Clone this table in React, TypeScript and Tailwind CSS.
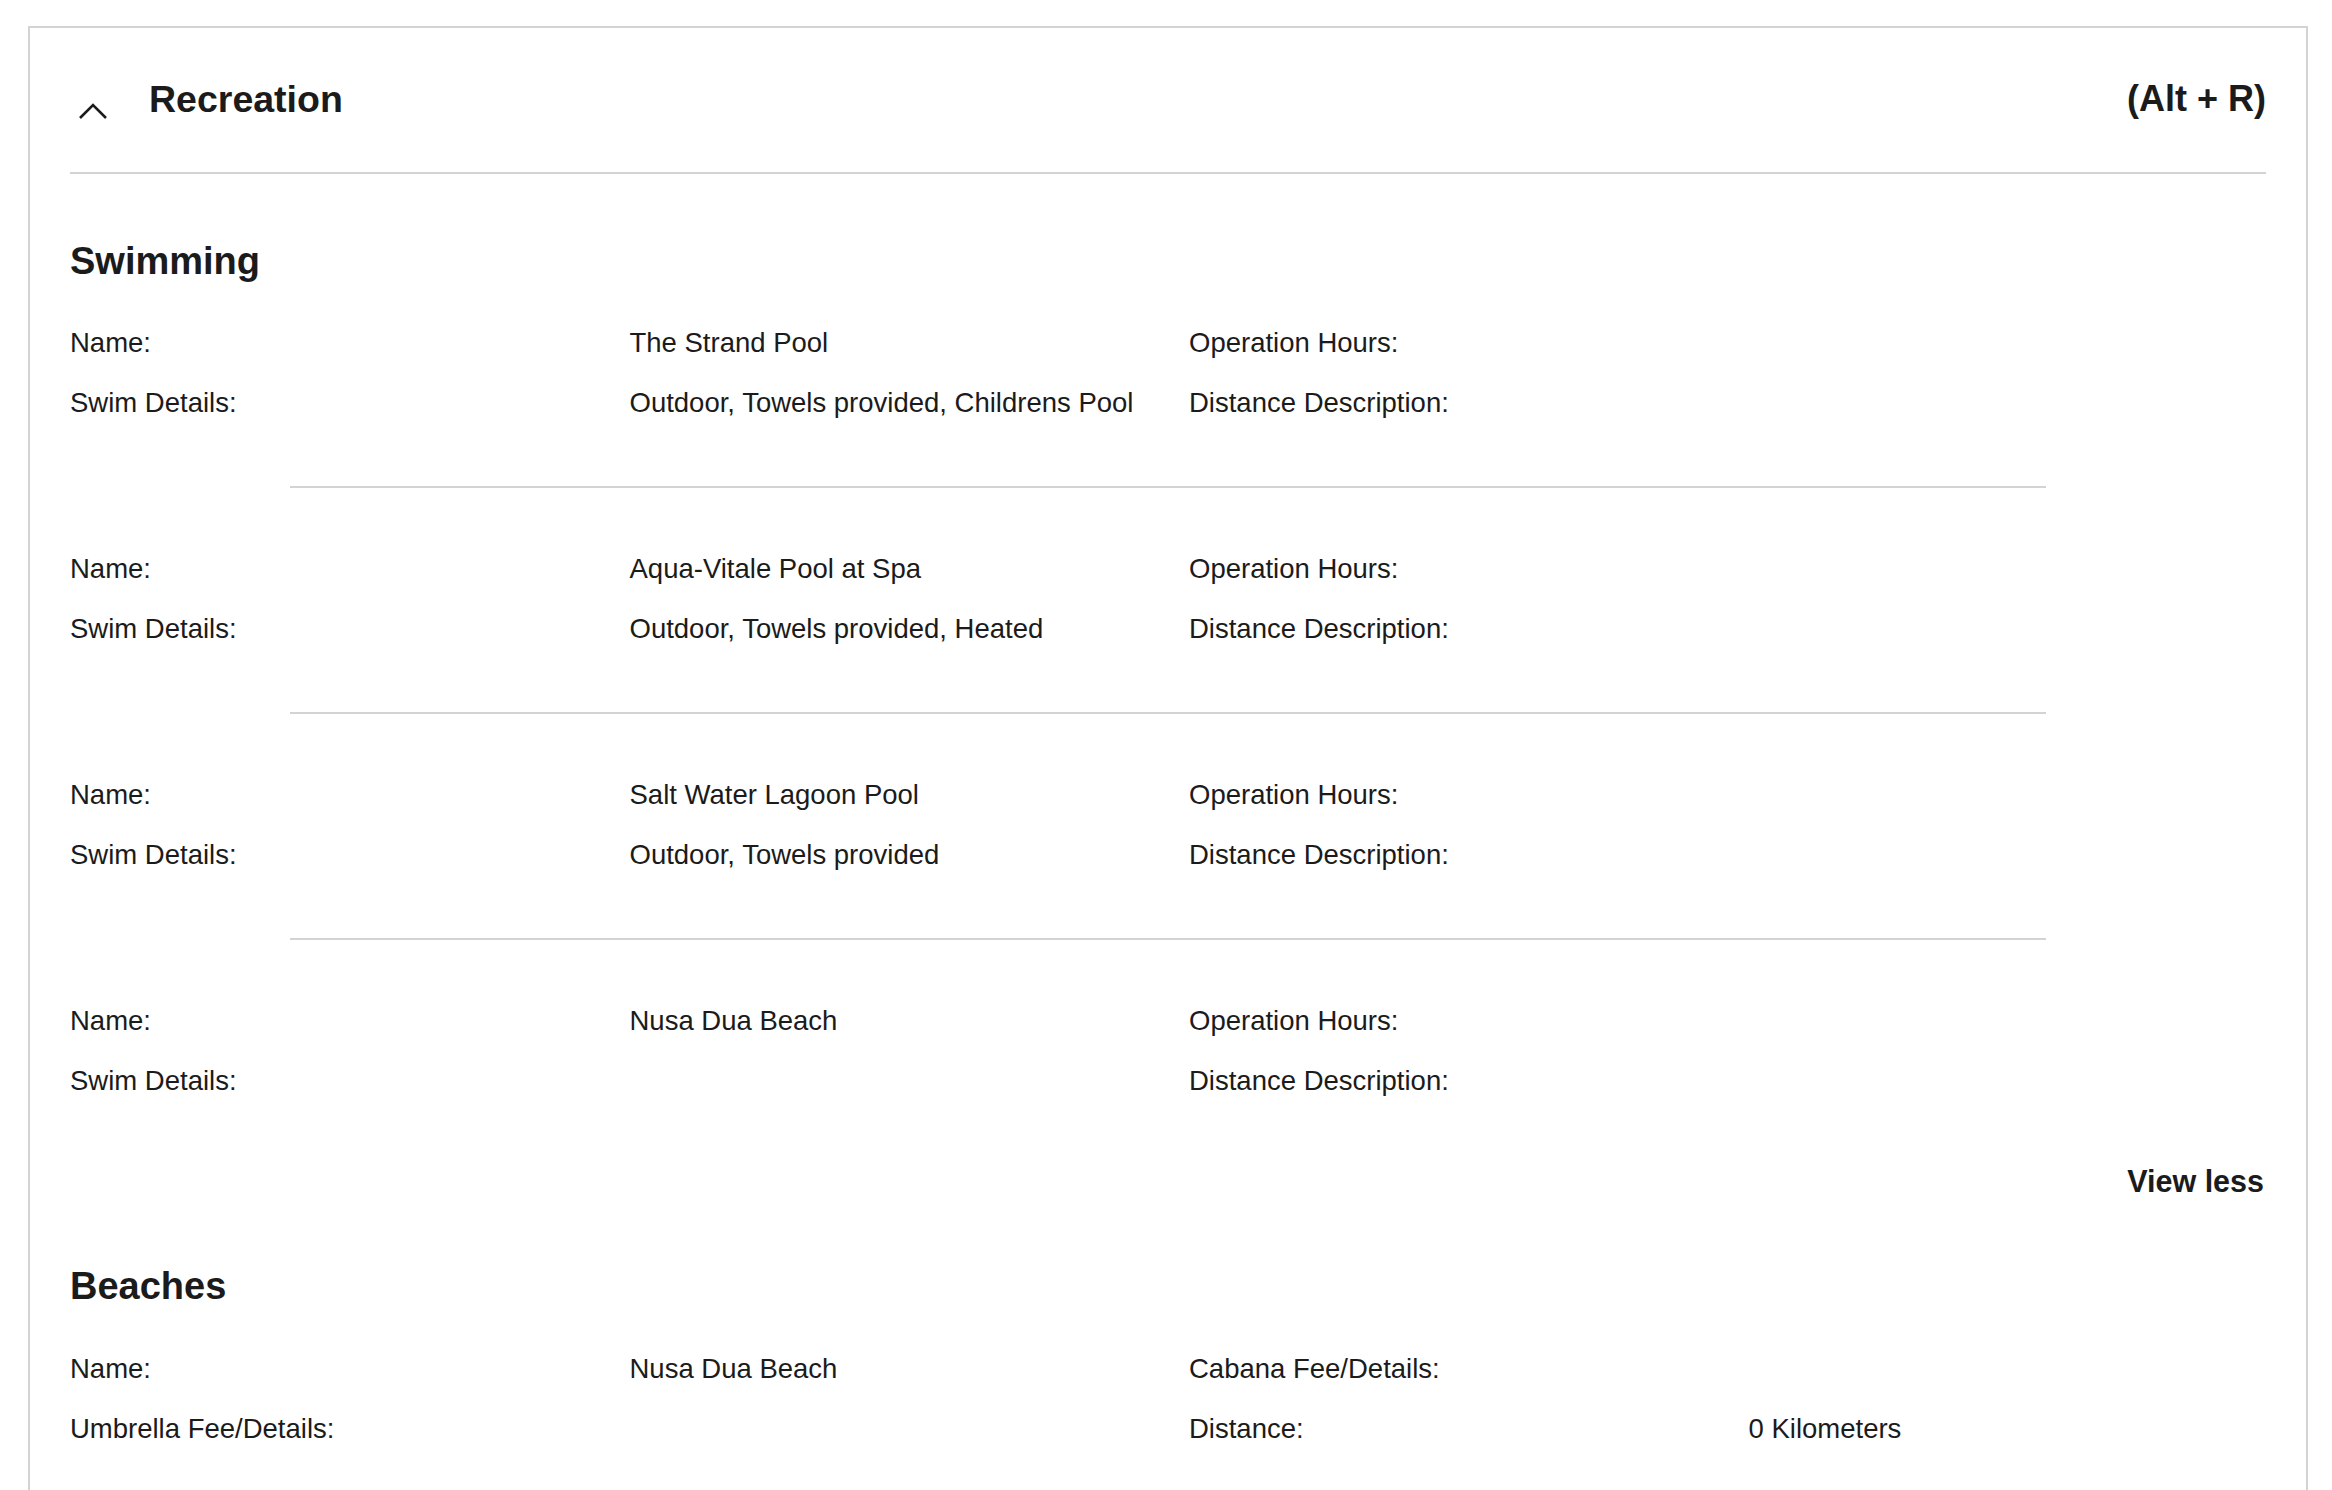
import React from "react";

type Row = [string, string, string, string];

const swimming: Row[][] = [
  [
    ["Name:", "The Strand Pool", "Operation Hours:", ""],
    ["Swim Details:", "Outdoor, Towels provided, Childrens Pool", "Distance Description:", ""],
  ],
  [
    ["Name:", "Aqua-Vitale Pool at Spa", "Operation Hours:", ""],
    ["Swim Details:", "Outdoor, Towels provided, Heated", "Distance Description:", ""],
  ],
  [
    ["Name:", "Salt Water Lagoon Pool", "Operation Hours:", ""],
    ["Swim Details:", "Outdoor, Towels provided", "Distance Description:", ""],
  ],
  [
    ["Name:", "Nusa Dua Beach", "Operation Hours:", ""],
    ["Swim Details:", "", "Distance Description:", ""],
  ],
];

const beaches: Row[] = [
  ["Name:", "Nusa Dua Beach", "Cabana Fee/Details:", ""],
  ["Umbrella Fee/Details:", "", "Distance:", "0 Kilometers"],
];

function Rows({ rows }: { rows: Row[] }) {
  return (
    <div>
      {rows.map((r, i) => (
        <div key={i} className="grid grid-cols-4 gap-x-[42px] text-[27.5px] leading-[60px]">
          {r.map((c, j) => (
            <div key={j} className="whitespace-nowrap">
              {c}
            </div>
          ))}
        </div>
      ))}
    </div>
  );
}

export default function App() {
  return (
    <div
      className="min-h-screen bg-white pt-[26px] pl-[28px] text-[#1b1b1b]"
      style={{ fontFamily: '"Liberation Sans", Arial, sans-serif' }}
    >
      <div className="w-[2280px] border-2 border-b-0 border-[#d3d3d3] px-[40px] pb-[60px]">
        {/* Header */}
        <div className="flex items-start justify-between border-b-2 border-[#d3d3d3] pt-[48px] pb-[50px]">
          <div className="flex items-start">
            <div className="w-[79px]">
              <svg
                width="30"
                height="18"
                viewBox="0 0 30 18"
                className="ml-[8px] mt-[26px]"
                fill="none"
                stroke="#1b1b1b"
                strokeWidth="2.6"
              >
                <polyline points="2,16 15,3 28,16" />
              </svg>
            </div>
            <h2 className="text-[37.5px] font-bold leading-[46px]">Recreation</h2>
          </div>
          <div className="text-[36px] font-bold leading-[46px]">(Alt + R)</div>
        </div>

        {/* Swimming */}
        <h3 className="mt-[64px] mb-[29px] text-[38px] font-bold leading-[46px]">Swimming</h3>
        {swimming.map((block, i) => (
          <div key={i}>
            {i > 0 && (
              <div className="mx-auto mt-[53px] mb-[51px] h-[2px] w-4/5 bg-[#d3d3d3]" />
            )}
            <Rows rows={block} />
          </div>
        ))}
        <div className="mt-[50px] flex justify-end pr-[2px]">
          <button className="text-[30.5px] font-bold leading-[40px] text-[#1b1b1b]">View less</button>
        </div>

        {/* Beaches */}
        <h3 className="mt-[62px] mb-[30px] text-[38px] font-bold leading-[46px]">Beaches</h3>
        <Rows rows={beaches} />
      </div>
    </div>
  );
}
